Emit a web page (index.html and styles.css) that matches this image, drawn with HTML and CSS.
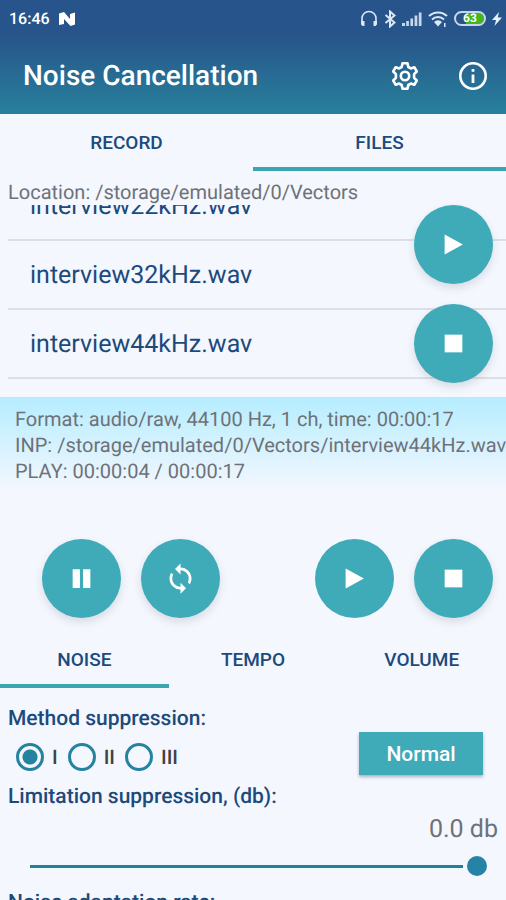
FILE: index.html
```html
<!DOCTYPE html>
<html lang="en">
<head>
<meta charset="utf-8">
<meta name="viewport" content="width=device-width, initial-scale=1">
<title>Noise Cancellation</title>
<link rel="stylesheet" href="styles.css">
</head>
<body>
<svg class="defs" aria-hidden="true">
  <symbol id="play" viewBox="0 0 24 24"><path d="M3.500 2.500 21 12 3.500 21.500z"/></symbol>
  <symbol id="stop" viewBox="0 0 24 24"><path d="M3.500 3.500h17v17h-17z"/></symbol>
  <symbol id="pause" viewBox="0 0 24 24"><path d="M3.500 3h7v18h-7zM13.500 3h7v18h-7z"/></symbol>
  <symbol id="sync" viewBox="0 0 24 24"><path d="M12 4V1L8 5l4 4V6c3.310 0 6 2.690 6 6 0 1.010-.25 1.970-.7 2.800l1.460 1.460C19.540 15.030 20 13.570 20 12c0-4.420-3.580-8-8-8zm0 14c-3.310 0-6-2.690-6-6 0-1.010.25-1.970.7-2.800L5.240 7.740C4.460 8.970 4 10.430 4 12c0 4.420 3.580 8 8 8v3l4-4-4-4v3z"/></symbol>
</svg>
<div class="app">
  <header class="header">
    <div class="status">
      <span class="clock">16:46</span>
      <svg class="n-logo" viewBox="0 0 16 14" width="16" height="14" aria-hidden="true"><path d="M0 1.500 5 0l6 7V2l5-1.500V12.500L11.500 14 5 7v5L0 13z" fill="#fff"/></svg>
      <div class="status-icons">
        <svg viewBox="0 0 18 18" width="18" height="18" aria-hidden="true"><path d="M2 13V8.500a7 7 0 0 1 14 0V13" fill="none" stroke="#dce8f5" stroke-width="1.600"/><path d="M1 11h3.500v5H2.500L1 14.500zM17 11h-3.500v5h2l1.500-1.500z" fill="#dce8f5"/></svg>
        <svg viewBox="0 0 12 18" width="12" height="18" aria-hidden="true"><path d="m1.500 5 9 7.500L6 16.500v-15l4.500 4-9 7.500" fill="none" stroke="#dce8f5" stroke-width="2"/></svg>
        <svg viewBox="0 0 20 18" width="20" height="18" aria-hidden="true"><path d="M0 13h3v3H0zM4.200 11h2.700v5H4.200zM8.400 8.500h2.700V16H8.400zM12.600 5.500h2.700V16h-2.700zM16.800 2.500h2.700V16h-2.700z" fill="#c6d7e9"/></svg>
        <svg viewBox="0 0 20 18" width="20" height="18" aria-hidden="true"><g fill="none" stroke="#dce8f5" stroke-width="2"><path d="M1 6a13 13 0 0 1 18 0M4 9.500a8.600 8.600 0 0 1 12 0"/></g><path d="M10 16.500 6 12a5.700 5.700 0 0 1 8 0zM16 13h1.500v4H16z" fill="#dce8f5"/></svg>
        <span class="battery">63</span>
        <svg viewBox="0 0 10 14" width="10" height="14" aria-hidden="true"><path d="M7 0 0 8h4L2.500 14 10 5.500H5.800z" fill="#e8f0f8"/></svg>
      </div>
    </div>
    <div class="toolbar">
      <h1 class="title">Noise Cancellation</h1>
      <button class="icon-button" type="button" aria-label="Settings">
        <svg viewBox="0 0 30 30" width="30" height="30" aria-hidden="true"><g fill="none" stroke="#fff" stroke-width="2.600" stroke-linejoin="round"><path d="M12.500 2.300h5l.8 3.700 2.500 1.400 3.500-1.200 2.500 4.300-2.700 2.700v3.600l2.700 2.700-2.500 4.300-3.500-1.200-2.500 1.400-.8 3.700h-5l-.8-3.700-2.500-1.400-3.500 1.200-2.500-4.300 2.700-2.700v-3.600l-2.700-2.700 2.500-4.300 3.500 1.200L11.700 6z"/><circle cx="15" cy="15" r="4.200"/></g></svg>
      </button>
      <button class="icon-button" type="button" aria-label="Information">
        <svg viewBox="0 0 30 30" width="30" height="30" aria-hidden="true"><circle cx="15" cy="15" r="12.700" fill="none" stroke="#fff" stroke-width="2.600"/><path d="M13.600 8h2.800v2.800h-2.800zM13.600 13.500h2.800V22h-2.800z" fill="#fff"/></svg>
      </button>
    </div>
  </header>

  <nav class="tabs">
    <button class="tab" type="button">RECORD</button>
    <button class="tab tab-active" type="button">FILES</button>
  </nav>

  <main>
    <p class="location">Location: /storage/emulated/0/Vectors</p>
    <section class="files">
      <ul class="file-list">
        <li class="file">interview22kHz.wav</li>
        <li class="file">interview32kHz.wav</li>
        <li class="file">interview44kHz.wav</li>
      </ul>
      <div class="file-actions">
        <button class="fab" type="button" aria-label="Play file"><svg class="glyph"><use href="#play"/></svg></button>
        <button class="fab" type="button" aria-label="Stop file"><svg class="glyph"><use href="#stop"/></svg></button>
      </div>
    </section>

    <section class="info">
      <p>Format: audio/raw, 44100 Hz, 1 ch, time: 00:00:17</p>
      <p>INP: /storage/emulated/0/Vectors/interview44kHz.wav</p>
      <p>PLAY: 00:00:04 / 00:00:17</p>
    </section>

    <section class="player">
      <button class="fab" type="button" aria-label="Pause"><svg class="glyph"><use href="#pause"/></svg></button>
      <button class="fab" type="button" aria-label="Repeat"><svg class="glyph glyph-large"><use href="#sync"/></svg></button>
      <button class="fab fab-flat push" type="button" aria-label="Play"><svg class="glyph"><use href="#play"/></svg></button>
      <button class="fab" type="button" aria-label="Stop"><svg class="glyph"><use href="#stop"/></svg></button>
    </section>

    <nav class="tabs">
      <button class="tab tab-active" type="button">NOISE</button>
      <button class="tab" type="button">TEMPO</button>
      <button class="tab" type="button">VOLUME</button>
    </nav>

    <section class="settings">
      <div class="method">
        <fieldset class="methods">
          <legend class="label">Method suppression:</legend>
          <div class="radios">
            <label class="radio"><input type="radio" name="method" checked>I</label>
            <label class="radio"><input type="radio" name="method">II</label>
            <label class="radio"><input type="radio" name="method">III</label>
          </div>
        </fieldset>
        <button class="normal" type="button">Normal</button>
      </div>
      <label class="label" for="limit">Limitation suppression, (db):</label>
      <output class="value" for="limit">0.0 db</output>
      <input class="slider" id="limit" type="range" min="-60" max="0" value="0">
      <p class="label">Noise adaptation rate:</p>
    </section>
  </main>
</div>
</body>
</html>
```
FILE: styles.css
```css
* {
  box-sizing: border-box;
}

body {
  margin: 0;
  background: #f4f7fe;
  color: #6e7278;
  font-family: Roboto, "Liberation Sans", sans-serif;
  text-rendering: geometricPrecision;
}

p, h1, ul, fieldset {
  margin: 0;
  padding: 0;
}

button {
  border: 0;
  padding: 0;
  font-family: inherit;
}

.defs {
  display: none;
}

.app {
  height: 100vh;
  overflow: hidden;
}

.header {
  background: linear-gradient(#27548a 0%, #27548a 30%, #27819c 100%);
  color: #fff;
}

.status {
  display: flex;
  align-items: center;
  height: 37px;
  padding: 0 4px 0 9px;
}

.clock {
  margin-right: 9px;
  font-size: 16px;
  font-weight: 500;
}

.status-icons {
  display: flex;
  align-items: center;
  gap: 6px;
  margin-left: auto;
}

.battery {
  width: 32px;
  height: 15px;
  border: 2px solid #c6d7e9;
  border-radius: 8px;
  background: linear-gradient(90deg, #27548a 36%, #43b51f 36%);
  background-clip: padding-box;
  font-size: 12px;
  font-weight: 700;
  line-height: 11px;
  text-align: center;
}

.toolbar {
  display: flex;
  align-items: center;
  gap: 38px;
  height: 77px;
  padding: 0 18px 0 23px;
}

.title {
  flex: 1;
  font-size: 28px;
  font-weight: 500;
}

.icon-button {
  width: 30px;
  height: 30px;
  background: none;
}

.tabs {
  display: flex;
}

.tab {
  flex: 1;
  height: 57px;
  border-top: 4px solid transparent;
  border-bottom: 4px solid transparent;
  background: none;
  color: #1c4a7c;
  font-size: 19px;
  font-weight: 500;
}

.tab-active {
  border-bottom-color: #3ba5b0;
}

.location {
  padding: 9px 8px 0;
  font-size: 20px;
  line-height: 25px;
}

.files {
  position: relative;
  height: 192px;
}

.file-list {
  display: flex;
  flex-direction: column;
  justify-content: flex-end;
  height: 100%;
  padding: 0 0 18px 8px;
  overflow: hidden;
  list-style: none;
}

.file {
  flex: none;
  height: 69px;
  padding-left: 22px;
  border-bottom: 2px solid #dcdfe5;
  color: #1c4a7c;
  font-size: 25px;
  line-height: 69px;
}

.file-actions {
  position: absolute;
  top: 0;
  right: 13px;
  display: grid;
  gap: 20px;
}

.fab {
  display: grid;
  place-items: center;
  width: 79px;
  height: 79px;
  border-radius: 50%;
  background: #3fabb8;
  box-shadow: 0 4px 8px rgba(40, 50, 60, 0.14);
}

.fab-flat {
  box-shadow: none;
}

.glyph {
  width: 25px;
  height: 25px;
  fill: #fff;
}

.glyph-large {
  width: 33px;
  height: 33px;
}

.info {
  padding: 9px 0 7px 15px;
  background: linear-gradient(#b5edff, #f4f7fe);
  font-size: 20px;
  line-height: 26px;
  white-space: nowrap;
}

.player {
  display: flex;
  gap: 20px;
  padding: 48px 13px 13px 42px;
}

.push {
  margin-left: auto;
}

.settings {
  padding: 18px 8px 0;
}

.label {
  display: block;
  padding: 0;
  color: #1c4a7c;
  font-size: 21px;
  font-weight: 500;
  line-height: 26px;
}

.method {
  display: flex;
  align-items: flex-end;
  justify-content: space-between;
  padding: 0 15px 9px 0;
}

.methods {
  border: 0;
}

.radios {
  display: flex;
  gap: 10px;
  padding: 11px 0 4px 8px;
}

.radio {
  display: flex;
  align-items: center;
  gap: 8px;
  color: #404246;
  font-size: 20px;
  font-weight: 500;
}

.radio input {
  appearance: none;
  width: 28px;
  height: 28px;
  margin: 0;
  border: 3px solid #2583a0;
  border-radius: 50%;
}

.radio input:checked {
  background: radial-gradient(circle, #2583a0 7px, transparent 8px);
}

.normal {
  width: 124px;
  height: 43px;
  background: #3fabb8;
  box-shadow: 0 2px 3px rgba(40, 50, 60, 0.35);
  color: #fff;
  font-size: 21px;
  font-weight: 500;
}

.value {
  display: block;
  font-size: 25px;
  line-height: 40px;
  text-align: right;
}

.slider {
  appearance: none;
  display: block;
  width: calc(100% - 33px);
  height: 20px;
  margin: 6px 11px 14px 22px;
  background: linear-gradient(#1d8496, #1d8496) left center / calc(100% - 24px) 3px no-repeat;
}

.slider::-webkit-slider-thumb {
  appearance: none;
  width: 20px;
  height: 20px;
  border-radius: 50%;
  background: #2583a6;
}
```
